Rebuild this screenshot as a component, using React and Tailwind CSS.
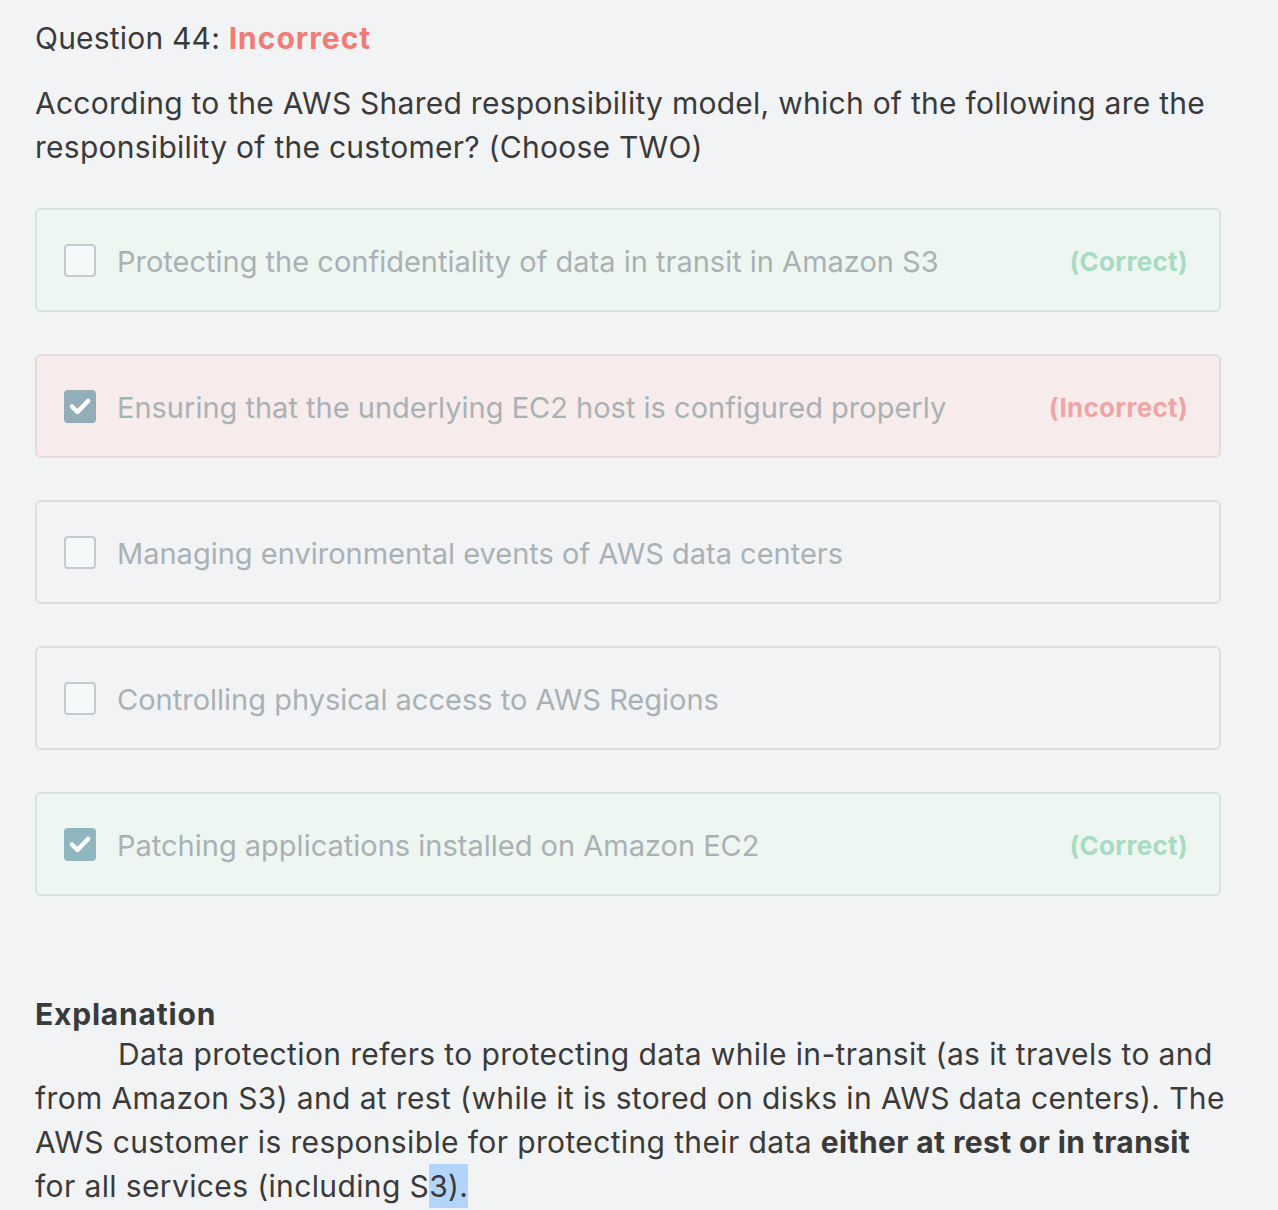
import React from "react";

const options = [
  { text: "Protecting the confidentiality of data in transit in Amazon S3", checked: false, state: "correct" },
  { text: "Ensuring that the underlying EC2 host is configured properly", checked: true, state: "incorrect" },
  { text: "Managing environmental events of AWS data centers", checked: false, state: "none" },
  { text: "Controlling physical access to AWS Regions", checked: false, state: "none" },
  { text: "Patching applications installed on Amazon EC2", checked: true, state: "correct" },
];

function Check({ checked, state }) {
  if (checked) {
    const bg = state === "incorrect" ? "bg-[#93adb9]" : "bg-[#8fb5be]";
    return (
      <div className={`w-[32px] h-[33px] rounded-[4px] ${bg} flex items-center justify-center shrink-0`}>
        <svg width="22" height="18" viewBox="0 0 22 18">
          <path d="M3 9.5 L8.5 15 L19 4" fill="none" stroke="white" strokeWidth="4.5" strokeLinecap="round" strokeLinejoin="round" />
        </svg>
      </div>
    );
  }
  return <div className="w-[32px] h-[33px] rounded-[4px] border-2 border-[#c3cbcf] bg-[#f5f9f9] shrink-0" />;
}

export default function App() {
  return (
    <div className="min-h-[1210px] bg-[#f2f3f5] pl-[35px] pr-[57px] pt-[16px] text-[#3a3a3a]" style={{ fontFamily: "Inter, 'Noto Sans', sans-serif" }}>
      <div className="text-[30px] leading-[44px] tracking-[0.2px]">
        Question 44: <span className="font-bold tracking-[1px] text-[#f27b76]">Incorrect</span>
      </div>
      <div className="mt-[21px] text-[30px] leading-[44px] tracking-[0.26px]">
        According to the AWS Shared responsibility model, which of the following are the responsibility of the customer? (Choose TWO)
      </div>
      <div className="mt-[39px] flex flex-col gap-[42px]">
        {options.map((o, i) => {
          const card =
            o.state === "correct"
              ? "bg-[#edf6f1] border-[#d9e3de]"
              : o.state === "incorrect"
              ? "bg-[#f8ebeb] border-[#e6dcdc]"
              : "bg-[#f2f3f5] border-[#dcdfe1]";
          return (
            <div key={i} className={`h-[104px] rounded-[6px] border-2 ${card} flex items-center pl-[27px] pr-[31px]`}>
              <Check checked={o.checked} state={o.state} />
              <div className="ml-[21px] pt-[3px] flex-1 text-[29px] text-[#a9b1b4]">{o.text}</div>
              {o.state === "correct" && <div className="pt-[3px] text-[26px] font-bold tracking-[0.3px] text-[#a8dcc1]">(Correct)</div>}
              {o.state === "incorrect" && <div className="pt-[3px] text-[26px] font-bold tracking-[0.3px] text-[#eea5a5]">(Incorrect)</div>}
            </div>
          );
        })}
      </div>
      <div className="mt-[100px] text-[30px] leading-[36px] font-bold tracking-[0.8px]">Explanation</div>
      <div className="mr-[-10px] text-[30px] leading-[44px] indent-[83px] tracking-[0.37px]">
        Data protection refers to protecting data while in-transit (as it travels to and from Amazon S3) and at rest (while it is stored on disks in AWS data centers). The AWS customer is responsible for protecting their data <b>either at rest or in transit</b> for all services (including S<span className="bg-[#b4d5fb] py-[4px]">3).</span>
      </div>
    </div>
  );
}
